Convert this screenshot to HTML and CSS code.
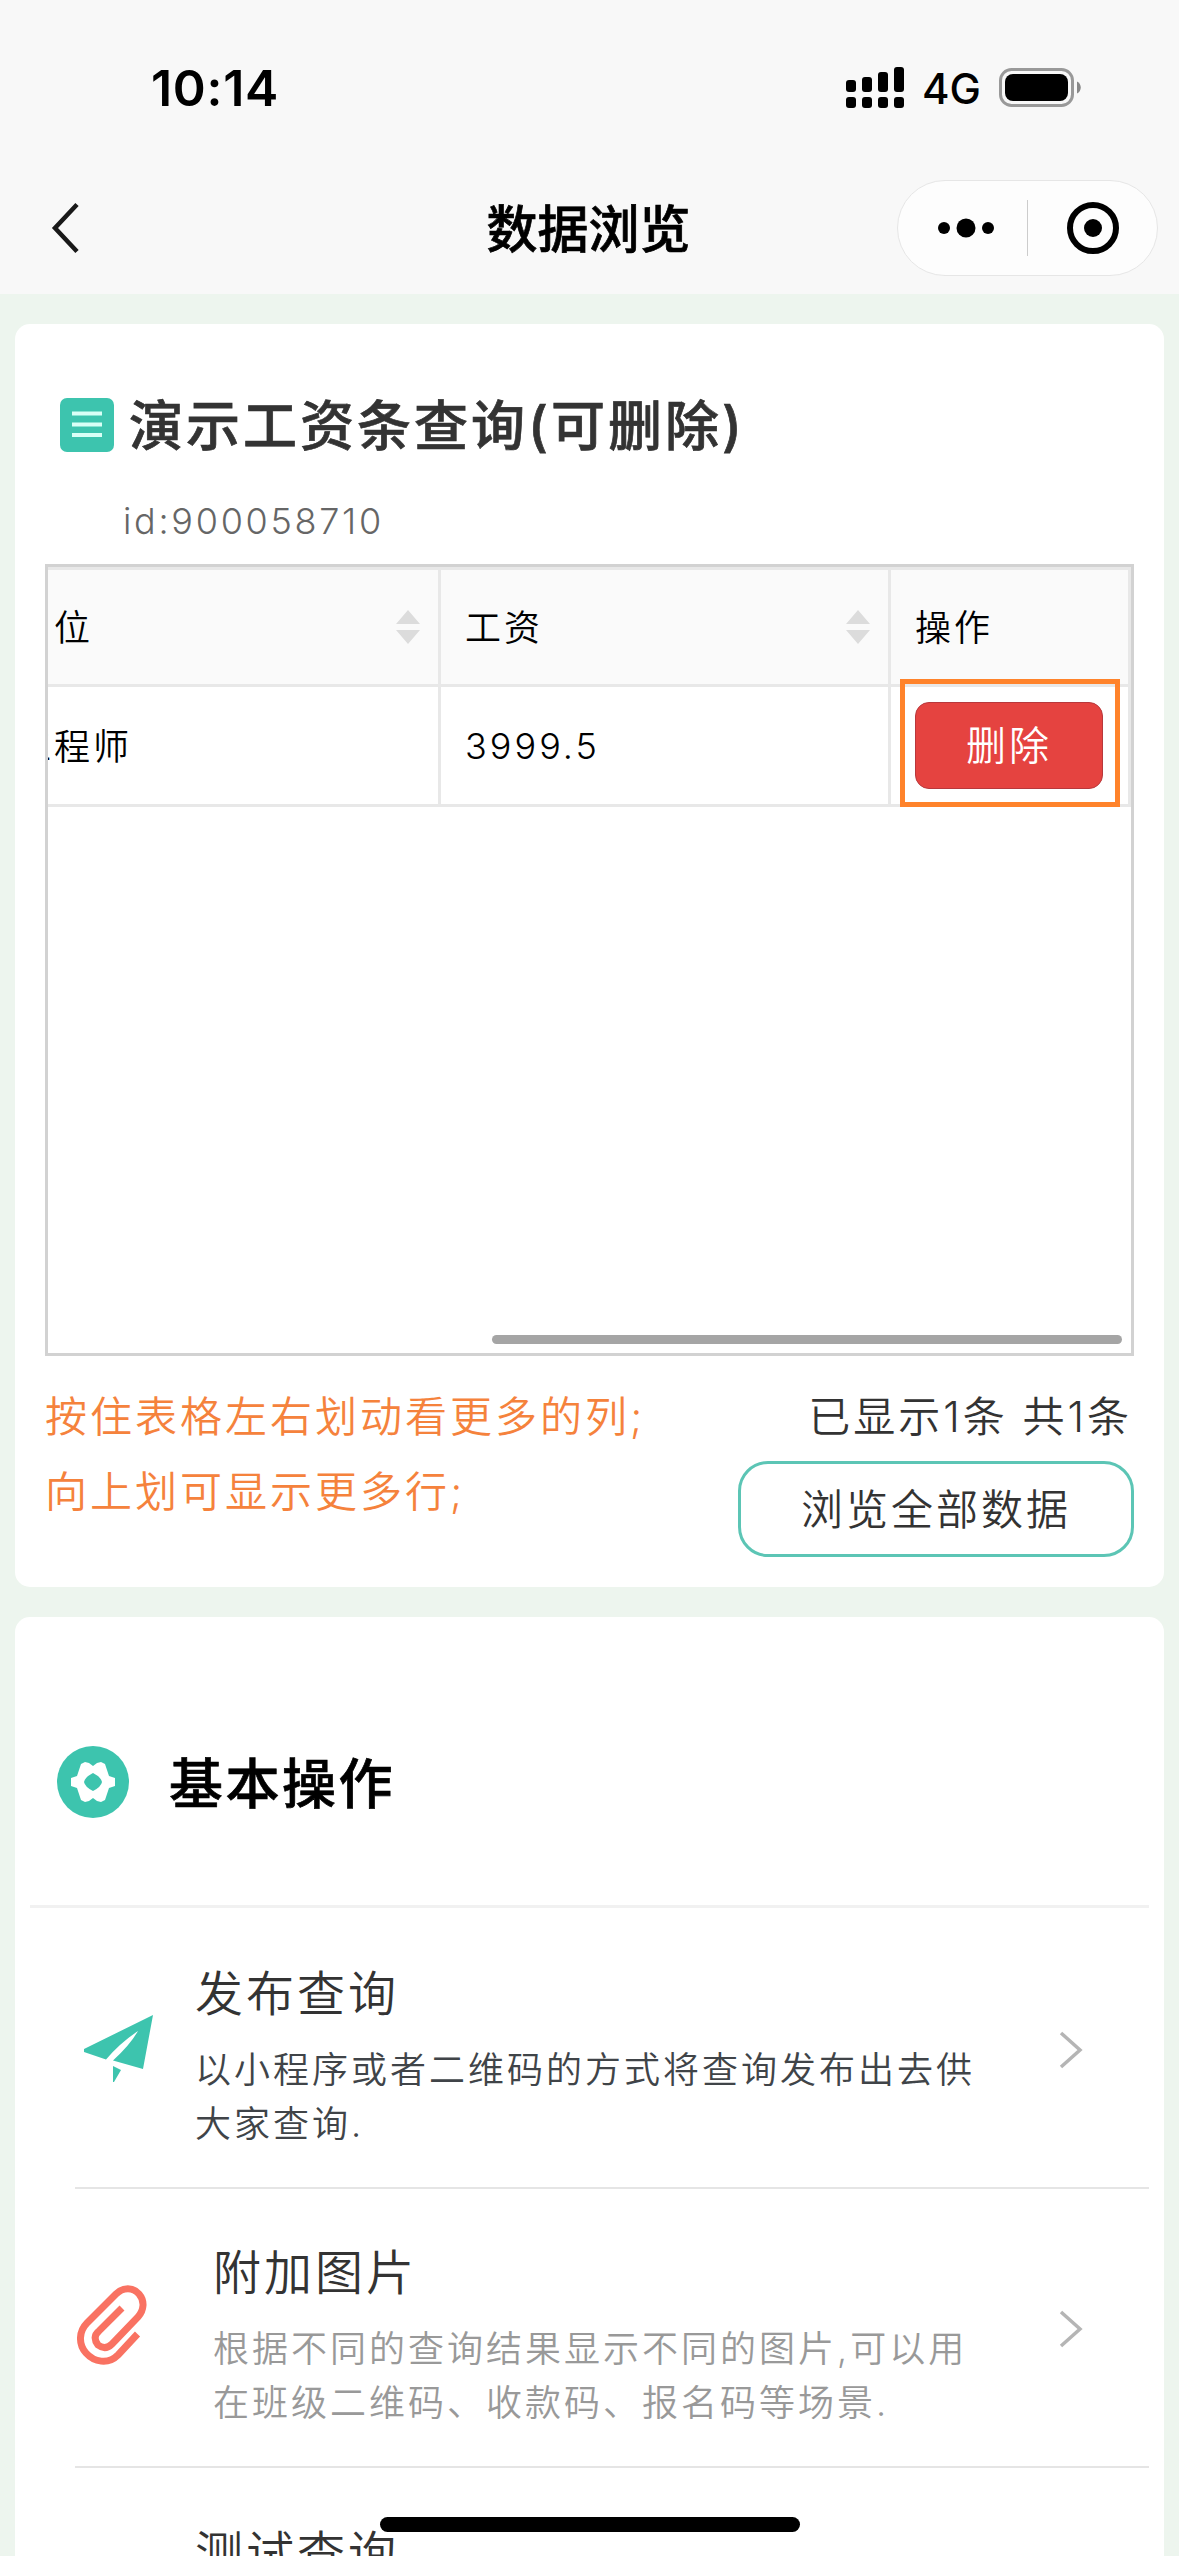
FILE: index.html
```html
<!DOCTYPE html>
<html lang="zh-CN">
<head>
<meta charset="utf-8">
<title>数据浏览</title>
<link rel="stylesheet" href="styles.css">
</head>
<body>
<div class="screen">
  <header class="topbar">
    <div class="status">
      <span class="time">10:14</span>
      <div class="status-icons">
        <svg class="signal" width="58" height="41" viewBox="0 0 58 41">
          <rect x="0" y="13" width="10" height="12" rx="3"/><rect x="16" y="10" width="10" height="15" rx="3"/>
          <rect x="32" y="5" width="10" height="20" rx="3"/><rect x="48" y="0" width="10" height="25" rx="3"/>
          <rect x="0" y="30" width="10" height="11" rx="3"/><rect x="16" y="30" width="10" height="11" rx="3"/>
          <rect x="32" y="30" width="10" height="11" rx="3"/><rect x="48" y="30" width="10" height="11" rx="3"/>
        </svg>
        <span class="network">4G</span>
        <svg class="battery" width="82" height="39" viewBox="0 0 82 39">
          <rect x="1.5" y="1.5" width="72" height="36" rx="11" fill="none" stroke="#999" stroke-width="3"/>
          <rect x="6" y="6" width="63" height="27" rx="8"/>
          <path d="M78 13.500c5 2 5 10 0 12z" fill="#888"/>
        </svg>
      </div>
    </div>
    <nav class="navbar">
      <svg class="back" width="30" height="52" viewBox="0 0 30 52"><path d="M26 2.500L4 26l22 23.500" fill="none" stroke="#191919" stroke-width="4.500"/></svg>
      <h1 class="page-title">数据浏览</h1>
      <div class="capsule">
        <svg class="more" width="56" height="20" viewBox="0 0 56 20"><circle cx="6" cy="10" r="6"/><circle cx="28" cy="10" r="9.500"/><circle cx="50" cy="10" r="6"/></svg>
        <span class="capsule-line"></span>
        <svg class="target" width="52" height="52" viewBox="0 0 52 52"><circle cx="26" cy="26" r="23" fill="none" stroke="#000" stroke-width="6"/><circle cx="26" cy="26" r="9"/></svg>
      </div>
    </nav>
  </header>

  <main class="content">
    <section class="card data-card">
      <div class="query-title">
        <svg width="54" height="54" viewBox="0 0 54 54"><rect width="54" height="54" rx="7" fill="#3dc4ae"/><path d="M12 15.500h30M12 26.500h30M12 37h30" stroke="#d9fff6" stroke-width="4"/></svg>
        <h2>演示工资条查询(可删除)</h2>
      </div>
      <p class="query-id">id:900058710</p>

      <div class="table-box">
        <div class="grid head">
          <div class="cell first"><span>位</span><svg class="sort" width="24" height="34" viewBox="0 0 24 34"><path d="M12 0l12 14H0zM0 20h24L12 34z"/></svg></div>
          <div class="cell"><span>工资</span><svg class="sort" width="24" height="34" viewBox="0 0 24 34"><path d="M12 0l12 14H0zM0 20h24L12 34z"/></svg></div>
          <div class="cell"><span>操作</span></div>
        </div>
        <div class="grid row">
          <div class="cell clipped"><span>工程师</span></div>
          <div class="cell"><span class="num">3999.5</span></div>
          <div class="cell action"><button class="delete">删除</button><i class="highlight"></i></div>
        </div>
        <div class="scroll-thumb"></div>
      </div>

      <div class="table-foot">
        <p class="hint">按住表格左右划动看更多的列;<br>向上划可显示更多行;</p>
        <div class="summary">
          <p>已显示1条 共1条</p>
          <button class="browse">浏览全部数据</button>
        </div>
      </div>
    </section>

    <section class="card ops-card">
      <div class="ops-head">
        <svg width="72" height="72" viewBox="0 0 72 72">
          <circle cx="36" cy="36" r="36" fill="#3dc4ae"/>
          <path d="M28 16L32 17L36 20L40 17L44 16L48 18L50 24L52 30L58 32L58 40L52 42L50 48L48 54L44 56L40 55L36 52L32 55L28 56L24 54L22 48L20 42L14 40L14 32L20 30L22 24L24 18Z" fill="#fff"/>
          <path d="M36 27q8 4 9 9q-1 5-9 9q-8-4-9-9q1-5 9-9z" fill="#3dc4ae"/>
        </svg>
        <h2>基本操作</h2>
      </div>
      <ul class="ops">
        <li class="op">
          <svg class="op-icon plane" width="72" height="70" viewBox="0 0 72 70" fill="#3dc4ae">
            <path d="M69 1L59 55L29 46.500Q46 31 54 17Q36 29 22 45.500L0 38V35z"/><path d="M29 52l8 4-7 12h-1z"/>
          </svg>
          <div class="op-text"><h3>发布查询</h3><p class="dark">以小程序或者二维码的方式将查询发布出去供<br>大家查询.</p></div>
          <svg class="chevron" width="24" height="38" viewBox="0 0 24 38"><path d="M2 2l19 17L2 36"/></svg>
        </li>
        <li class="op shifted">
          <svg class="op-icon clip" width="70" height="80" viewBox="0 0 70 80" fill="none" stroke="#f97262" stroke-width="7">
            <path d="M60.500 49L41 70C31 80 17 77 9 68C1 59 2 46 10 38L39 9C46 2 56 2 62 9C68 16 67 25 61 32L35 59C30 64 25 63 21 60C17 55 17 50 22 46L45 23"/>
          </svg>
          <div class="op-text"><h3>附加图片</h3><p>根据不同的查询结果显示不同的图片,可以用<br>在班级二维码、收款码、报名码等场景.</p></div>
          <svg class="chevron" width="24" height="38" viewBox="0 0 24 38"><path d="M2 2l19 17L2 36"/></svg>
        </li>
        <li class="op">
          <span class="op-icon"></span>
          <div class="op-text"><h3>测试查询</h3></div>
        </li>
      </ul>
    </section>
  </main>
  <div class="home-bar"></div>
</div>
</body>
</html>
```
FILE: styles.css
```css
* { box-sizing: border-box; margin: 0; padding: 0; }
body {
  font-family: Inter, "Noto Sans CJK SC", sans-serif;
  font-weight: 350;
  letter-spacing: 3px;
  color: #333;
  background: #edf5ee;
}
svg { display: block; flex: none; }
button { font: inherit; letter-spacing: inherit; }
h1, h2 { -webkit-text-stroke: 0.7px currentColor; }
.screen { position: relative; width: 1179px; height: 2556px; overflow: hidden; }

.topbar { height: 294px; background: #f8f8f8; color: #000; letter-spacing: 0; }
.status { height: 180px; padding: 0 98px 0 151px; display: flex; justify-content: space-between; }
.time { margin-top: 57px; font-size: 50px; line-height: 62px; font-weight: 600; letter-spacing: 0.7px; }
.status-icons { display: flex; align-items: flex-start; }
.signal { margin-top: 67px; }
.network { margin: 63px 0 0 18px; width: 77px; font-size: 42px; line-height: 52px; font-weight: 450; }
.battery { margin-top: 68px; }
.navbar { height: 96px; display: grid; grid-template-columns: 282px 1fr 261px; align-items: center; padding: 0 21px; }
.back { margin-left: 30px; }
.page-title { font-size: 51px; line-height: 60px; font-weight: 500; text-align: center; padding: 4px 23px 0 0; }
.capsule { height: 96px; border: 1px solid #e6e6e6; border-radius: 48px; background: #fdfdfd; display: flex; align-items: center; }
.more { margin-left: 40px; }
.capsule-line { width: 1px; height: 56px; margin: 0 39px 0 33px; background: #ccc; }

.content { padding: 30px 15px 0; display: flex; flex-direction: column; gap: 30px; }
.card { background: #fff; border-radius: 15px; }
.data-card { height: 1263px; padding: 61px 30px 0; }
.query-title { height: 80px; padding-left: 15px; display: flex; align-items: center; gap: 15px; }
.query-title h2 { padding-top: 3px; font-size: 54px; line-height: 80px; font-weight: 500; white-space: nowrap; }
.query-id { height: 99px; padding: 26px 0 0 78px; font-size: 36px; line-height: 60px; letter-spacing: 2.7px; color: #666; }

.table-box { position: relative; height: 792px; border: 3px solid #d2d2d2; color: #000; overflow: hidden; font-size: 36px; }
.grid { display: grid; grid-template-columns: 393px 450px 240px; }
.head { height: 120px; border-top: 3px solid #e8e8e8; border-bottom: 3px solid #e8e8e8; background: #fafafa; }
.row { height: 120px; border-bottom: 3px solid #e8e8e8; }
.cell { display: flex; align-items: center; justify-content: space-between; padding: 0 18px 0 24px; border-right: 3px solid #e8e8e8; white-space: nowrap; }
.cell span { padding-bottom: 5px; }
.cell .num { padding-bottom: 0; }
.cell.first { padding-left: 6px; }
.cell.clipped span { margin-left: -57px; padding-bottom: 4px; }
.cell.action { position: relative; padding-right: 25px; }
.sort { fill: #dcdcdc; }
.delete { width: 188px; height: 87px; padding-bottom: 5px; border: 1px solid #b8383c; border-radius: 14px; background: #e54340; color: #fff; font-size: 40px; }
.highlight { position: absolute; left: 9px; top: -8px; width: 220px; height: 128px; border: 5px solid #ff832b; }
.scroll-thumb { position: absolute; right: 9px; bottom: 9px; width: 630px; height: 9px; border-radius: 5px; background: #a5a5a5; }

.table-foot { display: flex; justify-content: space-between; font-size: 42px; }
.hint { padding-top: 23px; line-height: 75px; color: #f5823c; }
.summary { display: flex; flex-direction: column; align-items: flex-end; }
.summary p { padding: 26px 2px 0 0; line-height: 70px; height: 105px; white-space: nowrap; }
.browse { width: 396px; height: 96px; padding-bottom: 5px; border: 3px solid #5cc5b5; border-radius: 30px; background: #fff; color: #333; }

.ops-card { height: 1000px; padding: 0 15px; }
.ops-head { height: 291px; padding: 41px 0 0 27px; border-bottom: 3px solid #f1f1f1; display: flex; align-items: center; gap: 40px; }
.ops-head h2 { padding-top: 6px; font-size: 54px; line-height: 80px; font-weight: 500; letter-spacing: 2.5px; color: #000; }
.ops { list-style: none; padding-left: 45px; }
.op { height: 280px; border-bottom: 2px solid #e5e5e5; display: flex; align-items: flex-start; }
.op:first-child { height: 281px; }
.op.shifted { height: 279px; }
.op-icon { width: 72px; margin: 106px 39px 0 9px; }
.op-icon.clip { margin-left: 1px; margin-right: 65px; margin-top: 96px; }
.op-text { flex: 1; padding-top: 50px; white-space: nowrap; }
.shifted .op-text { padding-top: 48px; }
.op-text h3 { font-size: 48px; line-height: 72px; font-weight: inherit; }
.op-text p { padding-top: 13px; font-size: 36px; line-height: 54px; color: #999; }
.op-text .dark { color: #404448; }
.chevron { margin: 123px 66px 0 0; fill: none; stroke: #b5b5b5; stroke-width: 3.500; }
.shifted .chevron { margin-top: 121px; }
.home-bar { position: absolute; left: 380px; top: 2517px; width: 420px; height: 15px; border-radius: 8px; background: #000; }
```
